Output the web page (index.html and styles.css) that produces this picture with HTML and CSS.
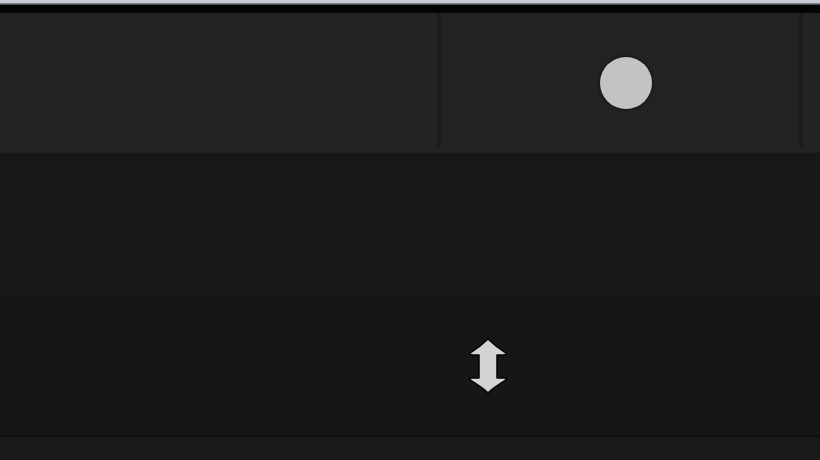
FILE: index.html
```html
<!DOCTYPE html>
<html>
<head>
<meta charset="utf-8">
<link rel="stylesheet" href="styles.css">
</head>
<body>
<div class="page">
  <div class="topstrip"><div class="hl"></div><div class="fade"></div><div class="blk"></div></div>
  <div class="toolbar">
    <div class="cell cell-a"></div>
    <div class="divider"></div>
    <div class="cell cell-b"><div class="knob"></div></div>
    <div class="divider"></div>
    <div class="cell cell-c"></div>
  </div>
  <div class="band band-1"></div>
  <div class="band band-2">
    <svg class="resize" width="40" height="56" viewBox="0 0 40 56">
      <path d="M20 1 C24 5 30 10 38 15 C39 16 38 17 36 17 L29 17 L29 40 L36 40 C38 40 39 41 38 42 C30 47 24 51 20 55 C16 51 10 47 2 42 C1 41 2 40 4 40 L11 40 L11 17 L4 17 C2 17 1 16 2 15 C10 10 16 5 20 1 Z" fill="#d4d4d4" stroke="#050505" stroke-width="1.5" stroke-linejoin="round"/>
    </svg>
  </div>
  <div class="band band-3"></div>
</div>
</body>
</html>
```
FILE: styles.css
```css
html, body {
  margin: 0;
  padding: 0;
  background: #181818;
}
.page {
  width: 820px;
  height: 460px;
  display: flex;
  flex-direction: column;
  overflow: hidden;
}
.topstrip {
  display: flex;
  flex-direction: column;
  flex: none;
}
.hl { height: 3px; background: #c7cbda; }
.fade { height: 2px; background: linear-gradient(#9a9ca4, #3a3a3a); }
.blk { height: 8px; background: #050505; }
.toolbar {
  height: 139px;
  flex: none;
  display: flex;
  background: #232323;
  border-bottom: 1px solid #1f1f1f;
}
.cell { height: 100%; }
.cell-a { width: 437px; }
.cell-b {
  width: 358px;
  display: flex;
  align-items: center;
  justify-content: center;
  padding-left: 12px;
  padding-top: 1px;
  box-sizing: border-box;
}
.cell-c { flex: 1; }
.divider {
  width: 4px;
  flex: none;
  margin-bottom: 5px;
  background: linear-gradient(90deg, #1f1f1f, #191919 50%, #1f1f1f);
}
.knob {
  width: 52px;
  height: 52px;
  border-radius: 50%;
  background: #c3c3c3;
  box-shadow: 0 0 3px 1px #141414;
}
.band-1 {
  height: 144px;
  flex: none;
  background: #181818;
  border-bottom: 1px solid #141414;
}
.band-2 {
  height: 139px;
  flex: none;
  background: #161616;
  border-bottom: 2px solid #111111;
  display: flex;
  align-items: center;
  padding-left: 468px;
  box-sizing: border-box;
}
.resize {
  display: block;
  margin-top: -2px;
  filter: blur(0.6px);
}
.band-3 {
  flex: 1;
  background: #191919;
}
```
